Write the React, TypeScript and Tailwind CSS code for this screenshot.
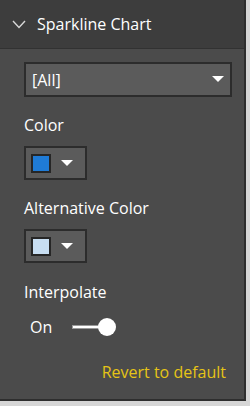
import React from 'react'

const font = { fontFamily: '"Open Sans", "Noto Sans", sans-serif' }

const Caret = () => (
    <svg width="12" height="7" viewBox="0 0 12 7">
        <polygon points="0,0 12,0 6,6" fill="#ffffff" />
    </svg>
)

const ColorPicker = ({ color }: { color: string }) => (
    <div className="w-[63px] h-[34px] bg-[#5b5b5b] border-2 border-[#2c2c2c] flex items-center pl-[5px] gap-[10px]">
        <div className="w-[20px] h-[19px] border-2 border-[#262626]" style={{ background: color }} />
        <Caret />
    </div>
)

const App = () => {
    return (
        <div className="w-[250px] h-[406px] bg-[#d6d6d6]" style={font}>
            <div className="w-[246px] h-[401px] bg-[#4b4b4b] border-r-2 border-b-2 border-[#2e2e2e] flex flex-col">
                <div className="h-[49px] bg-[#3d3d3d] border-b border-[#323232] flex items-center pl-[12px] gap-[11px] shrink-0">
                    <svg width="14" height="9" viewBox="0 0 14 9" className="mt-[1px]">
                        <polyline points="1,1 7,7.5 13,1" fill="none" stroke="#d8d8d8" strokeWidth="1.4" />
                    </svg>
                    <span className="text-white text-[16px] leading-none pb-[1px]">Sparkline Chart</span>
                </div>
                <div className="flex flex-col pl-[24px] pt-[13px]">
                    <div className="w-[208px] h-[35px] bg-[#5b5b5b] border-2 border-[#2c2c2c] flex items-center justify-between pl-[6px] pr-[6px]">
                        <span className="text-white text-[16px] leading-none">[All]</span>
                        <Caret />
                    </div>
                    <span className="text-white text-[16px] leading-none mt-[20px]">Color</span>
                    <div className="mt-[13px]">
                        <ColorPicker color="#1f7bd6" />
                    </div>
                    <span className="text-white text-[16px] leading-none mt-[20px]">Alternative Color</span>
                    <div className="mt-[13px]">
                        <ColorPicker color="#c8def2" />
                    </div>
                    <span className="text-white text-[16px] leading-none mt-[21px]">Interpolate</span>
                    <div className="flex items-center mt-[18px] pl-[6px] gap-[20px]">
                        <span className="text-white text-[16px] leading-none">On</span>
                        <div className="flex items-center">
                            <div className="w-[28px] h-[4px] bg-white border border-[#999]" />
                            <div className="w-[18px] h-[18px] rounded-full bg-white -ml-[2px]" />
                        </div>
                    </div>
                    <div className="flex justify-end pr-[18px] mt-[28px]">
                        <span className="text-[#e6c416] text-[16px] leading-none">Revert to default</span>
                    </div>
                </div>
            </div>
        </div>
    )
}

export default App
